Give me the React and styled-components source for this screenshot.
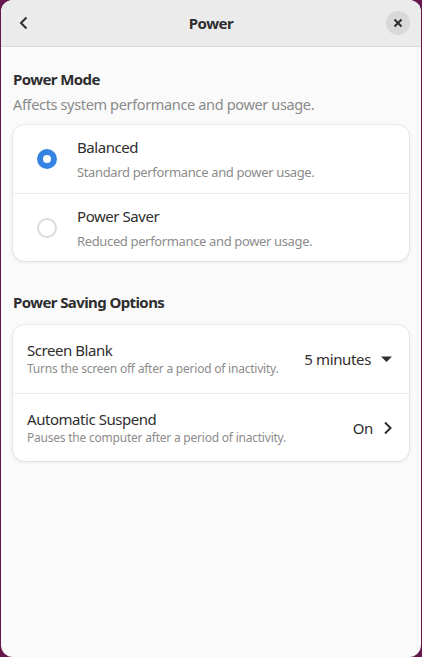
import React, { useState } from 'react'
import styled, { createGlobalStyle } from 'styled-components'

const GlobalStyle = createGlobalStyle`
  html, body {
    margin: 0;
    padding: 0;
    background: #65174d;
    font-family: "Noto Sans", "Open Sans", sans-serif;
    letter-spacing: -0.35px;
  }
`

const Window = styled.div`
  width: 420px;
  height: 657px;
  margin: 0 1px;
  background: #fafafa;
  border-radius: 12px;
  overflow: hidden;
  display: flex;
  flex-direction: column;
`

const HeaderBar = styled.div`
  height: 46px;
  flex-shrink: 0;
  background: #ebebeb;
  border-bottom: 1px solid #d9d9d9;
  display: grid;
  grid-template-columns: 46px 1fr 46px;
  align-items: center;
`

const Title = styled.div`
  text-align: center;
  font-weight: 700;
  font-size: 15px;
  letter-spacing: -0.5px;
  color: #2e2e2e;
`

const IconButton = styled.button`
  width: ${p => (p.round ? '24px' : '34px')};
  height: ${p => (p.round ? '24px' : '34px')};
  border: 0;
  padding: 0;
  border-radius: 50%;
  background: ${p => (p.round ? '#d9d9d9' : 'transparent')};
  display: flex;
  align-items: center;
  justify-content: center;
  justify-self: center;
  color: #2e2e2e;
  cursor: pointer;
`

const Content = styled.div`
  padding: 23px 12px;
  display: flex;
  flex-direction: column;
`

const GroupTitle = styled.h2`
  margin: 0;
  font-size: 15px;
  font-weight: 700;
  letter-spacing: -0.6px;
  color: #2e2e2e;
  line-height: 18px;
`

const GroupDesc = styled.p`
  margin: 6px 0 0;
  font-size: 14.5px;
  color: #8a8a8a;
  line-height: 20px;
`

const Card = styled.div`
  margin-top: ${p => p.top}px;
  margin-bottom: 32px;
  background: #ffffff;
  border-radius: 12px;
  box-shadow: 0 0 0 1px rgba(0, 0, 0, 0.04), 0 1px 4px rgba(0, 0, 0, 0.1);
  overflow: hidden;
`

const Row = styled.div`
  height: 68px;
  display: flex;
  align-items: center;
  padding: 0 17px 0 14px;
  box-sizing: border-box;
  & + & {
    border-top: 1px solid #ebebeb;
  }
`

const RadioSlot = styled.div`
  width: 40px;
  display: flex;
  justify-content: center;
  margin-right: 10px;
`

const Radio = styled.span`
  width: 20px;
  height: 20px;
  border-radius: 50%;
  box-sizing: border-box;
  border: ${p => (p.checked ? '6.5px solid #3584e4' : '2px solid #dcdcdc')};
  background: #fff;
`

const Labels = styled.div`
  flex: 1;
  display: flex;
  flex-direction: column;
  gap: ${p => p.gap}px;
`

const RowTitle = styled.div`
  font-size: 15px;
  color: #2e2e2e;
  line-height: 18px;
  letter-spacing: -0.45px;
`

const RowSub = styled.div`
  font-size: ${p => p.size}px;
  color: #8c8c8c;
  line-height: 16px;
  letter-spacing: ${p => (p.size < 13 ? '-0.22px' : '-0.36px')};
`

const Value = styled.div`
  display: flex;
  align-items: center;
  gap: 10px;
  font-size: 15px;
  color: #2e2e2e;
`

const modes = [
  { name: 'Balanced', sub: 'Standard performance and power usage.' },
  { name: 'Power Saver', sub: 'Reduced performance and power usage.' },
]

export default function App() {
  const [mode, setMode] = useState('Balanced')

  return (
    <>
      <GlobalStyle />
      <Window>
        <HeaderBar>
          <IconButton>
            <svg width="16" height="16" viewBox="0 0 16 16">
              <path d="M10.5 2.5 5 8l5.5 5.5" fill="none" stroke="#2e2e2e" strokeWidth="2" />
            </svg>
          </IconButton>
          <Title>Power</Title>
          <IconButton round>
            <svg width="10" height="10" viewBox="0 0 10 10">
              <path d="M1.5 1.5l7 7M8.5 1.5l-7 7" stroke="#2e2e2e" strokeWidth="2" />
            </svg>
          </IconButton>
        </HeaderBar>
        <Content>
          <GroupTitle>Power Mode</GroupTitle>
          <GroupDesc>Affects system performance and power usage.</GroupDesc>
          <Card top={11}>
            {modes.map(m => (
              <Row key={m.name} onClick={() => setMode(m.name)}>
                <RadioSlot>
                  <Radio checked={mode === m.name} />
                </RadioSlot>
                <Labels gap={8}>
                  <RowTitle>{m.name}</RowTitle>
                  <RowSub size={13}>{m.sub}</RowSub>
                </Labels>
              </Row>
            ))}
          </Card>
          <GroupTitle>Power Saving Options</GroupTitle>
          <Card top={14}>
            <Row>
              <Labels gap={2}>
                <RowTitle>Screen Blank</RowTitle>
                <RowSub size={12}>Turns the screen off after a period of inactivity.</RowSub>
              </Labels>
              <Value>
                5 minutes
                <svg width="11" height="8" viewBox="0 0 11 8">
                  <path d="M0 1.5h11L5.5 7z" fill="#2e2e2e" />
                </svg>
              </Value>
            </Row>
            <Row>
              <Labels gap={2}>
                <RowTitle>Automatic Suspend</RowTitle>
                <RowSub size={12}>Pauses the computer after a period of inactivity.</RowSub>
              </Labels>
              <Value>
                On
                <svg width="9" height="14" viewBox="0 0 9 14">
                  <path d="M2 1.5 7.5 7 2 12.5" fill="none" stroke="#2e2e2e" strokeWidth="2" />
                </svg>
              </Value>
            </Row>
          </Card>
        </Content>
      </Window>
    </>
  )
}
